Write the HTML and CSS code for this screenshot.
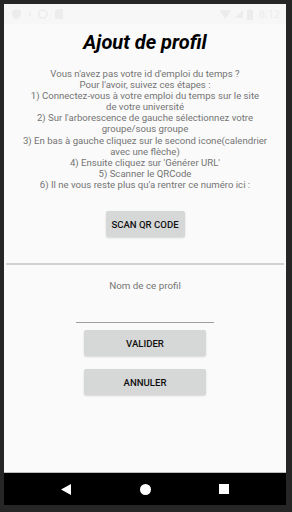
FILE: index.html
```html
<!DOCTYPE html>
<html lang="fr">
<head>
    <meta charset="UTF-8">
    <meta name="viewport" content="width=device-width, initial-scale=1.0">
    <title>Ajout de profil</title>
    <link rel="stylesheet" href="styles.css">
</head>
<body>
    <div class="phone">
        <div class="screen">
            <div class="status-bar">
                <div class="status-left">
                    <svg width="9" height="10" viewBox="0 0 9 10"><path d="M4.5 0 L9 2 V5 C9 8 6.5 9.5 4.5 10 C2.5 9.5 0 8 0 5 V2 Z" fill="#ececec"/></svg>
                    <svg width="3" height="5" viewBox="0 0 3 5"><rect x="1" y="0" width="1.5" height="4" fill="#ececec"/></svg>
                    <svg width="10" height="10" viewBox="0 0 10 10"><circle cx="5" cy="5" r="4" fill="none" stroke="#ececec" stroke-width="1.6"/></svg>
                    <svg width="8" height="10" viewBox="0 0 8 10"><path d="M2 0 H8 V10 H0 V2 Z" fill="#ececec"/></svg>
                </div>
                <div class="status-right">
                    <svg width="11" height="9" viewBox="0 0 11 9"><path d="M0 1 Q5.5 -2 11 1 L5.5 9 Z" fill="#ececec"/></svg>
                    <svg width="8" height="8" viewBox="0 0 8 8"><path d="M8 0 V8 H0 Z" fill="#ececec"/></svg>
                    <svg width="6" height="11" viewBox="0 0 6 11"><rect x="0" y="1" width="6" height="10" fill="#ececec"/><rect x="2" y="0" width="2" height="1" fill="#ececec"/></svg>
                    <span class="clock">8:12</span>
                </div>
            </div>

            <div class="content">
                <h1 class="title">Ajout de profil</h1>
                <p class="help">
                    Vous n'avez pas votre id d'emploi du temps ?<br>
                    Pour l'avoir, suivez ces étapes :<br>
                    1) Connectez-vous à votre emploi du temps sur le site<br>
                    de votre université<br>
                    2) Sur l'arborescence de gauche sélectionnez votre<br>
                    groupe/sous groupe<br>
                    3) En bas à gauche cliquez sur le second icone(calendrier<br>
                    avec une flèche)<br>
                    4) Ensuite cliquez sur 'Générer URL'<br>
                    5) Scanner le QRCode<br>
                    6) Il ne vous reste plus qu'a rentrer ce numéro ici :
                </p>
                <button class="btn btn-scan">SCAN QR CODE</button>
                <div class="divider"></div>
                <p class="label">Nom de ce profil</p>
                <div class="field"></div>
                <button class="btn btn-wide">VALIDER</button>
                <button class="btn btn-wide">ANNULER</button>
            </div>

            <div class="nav-bar">
                <svg width="10" height="11" viewBox="0 0 10 11"><path d="M10 0 V11 L0 5.5 Z" fill="#fff"/></svg>
                <svg width="11" height="11" viewBox="0 0 11 11"><circle cx="5.5" cy="5.5" r="5.5" fill="#fff"/></svg>
                <svg width="10" height="10" viewBox="0 0 10 10"><rect width="10" height="10" fill="#fff"/></svg>
            </div>
        </div>
    </div>
</body>
</html>
```

FILE: styles.css
```css
body {
    margin: 0;
    background-color: #262626;
    font-family: Roboto, "Liberation Sans", sans-serif;
}
.phone {
    width: 292px;
    height: 512px;
    padding: 4px 6px 7px 4px;
    box-sizing: border-box;
}
.screen {
    display: flex;
    flex-direction: column;
    height: 100%;
    background-color: #fafafa;
}
.status-bar {
    height: 20px;
    display: flex;
    justify-content: space-between;
    align-items: center;
    padding: 0 6px 0 8px;
    background-color: #f7f7f7;
}
.status-left,
.status-right {
    display: flex;
    align-items: center;
    gap: 7px;
}
.status-right {
    gap: 4px;
}
.clock {
    color: #ececec;
    font-size: 11px;
    margin-left: 2px;
}
.content {
    flex: 1;
    display: flex;
    flex-direction: column;
    align-items: center;
    border-bottom: 1px solid #bdbdbd;
}
.title {
    margin: 5px 0 0;
    font-size: 20px;
    font-weight: bold;
    font-style: italic;
    color: #000;
    line-height: 26px;
}
.help {
    margin: 13px 0 0;
    font-size: 9.6px;
    line-height: 11.1px;
    color: #747474;
    text-align: center;
}
.btn {
    border: none;
    border-radius: 2px;
    background-color: #d6d7d7;
    box-shadow: 0 1px 2px rgba(0, 0, 0, 0.15);
    font-family: Roboto, "Liberation Sans", sans-serif;
    font-size: 9.6px;
    font-weight: 500;
    color: #111;
    padding: 0;
}
.btn-scan {
    margin-top: 21px;
    width: 79px;
    height: 26px;
}
.divider {
    align-self: stretch;
    margin: 26px 2px 0;
    height: 2px;
    background-color: #d2d2d2;
}
.label {
    margin: 15px 0 0;
    font-size: 9.8px;
    color: #757575;
}
.field {
    margin-top: 31px;
    width: 138px;
    height: 1px;
    background-color: #9e9e9e;
}
.btn-wide {
    width: 122px;
    height: 26px;
    margin-top: 7px;
}
.btn-wide + .btn-wide {
    margin-top: 13px;
}
.nav-bar {
    height: 32px;
    background-color: #000;
    display: flex;
    justify-content: space-between;
    align-items: center;
    padding: 0 57px;
}
```
